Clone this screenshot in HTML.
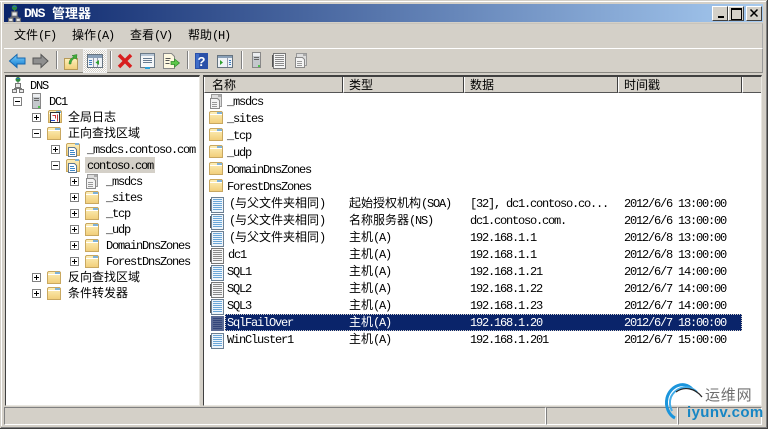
<!DOCTYPE html>
<html><head><meta charset="utf-8"><style>
html,body{margin:0;padding:0;background:#d4d0c8}
#w{position:relative;width:768px;height:429px;overflow:hidden;background:#d4d0c8;font-family:"Liberation Mono","Noto Sans CJK SC",monospace;font-size:12px;color:#000}
#w div{position:absolute}
.t{white-space:pre;height:16px;line-height:16px;letter-spacing:-1.2px;margin-top:1px}
.t i{font-style:normal;font-family:"WenQuanYi Zen Hei","Noto Sans CJK SC",sans-serif;font-size:12px;letter-spacing:0;position:relative;top:0}
.t:has(i){margin-top:0}
svg{position:absolute;overflow:visible}
.b{width:7px;height:7px;border:1px solid #808080;background:#fff}
.b:before{content:"";position:absolute;left:1px;top:3px;width:5px;height:1px;background:#000}
.p:after{content:"";position:absolute;left:3px;top:1px;width:1px;height:5px;background:#000}
.sep{width:1px;height:18px;top:51px;background:#808080;border-right:1px solid #fff}
.h{top:77px;height:15px;background:#d4d0c8;border-right:1px solid #404040;border-left:1px solid #fff;border-bottom:1px solid #555}
.wb{width:14px;height:13px;top:6px;background:#d4d0c8;border:1px solid;border-color:#fff #404040 #404040 #fff}
</style></head><body><div id="w">
<svg width="0" height="0" style="position:absolute"><defs>
<linearGradient id="fg" x1="0" y1="0" x2="0" y2="1"><stop offset="0" stop-color="#fdf0bb"/><stop offset="1" stop-color="#f1cd78"/></linearGradient>
<symbol id="folder" viewBox="0 0 14 13"><path d="M.5 12.500V1.500l1-1h11l1 1v11z" fill="url(#fg)" stroke="#c9a860"/><path d="M8 1h5v2H8z" fill="#7fb2d8"/><path d="M1 3.500h12" stroke="#fff"/></symbol>
<symbol id="rec" viewBox="0 0 14 16"><rect x="1.500" y=".5" width="12" height="15" fill="#eef5fb" stroke="#6b7f93"/><path d="M3 2.500h9M3 4.500h9M3 6.500h9M3 8.500h9M3 10.500h9M3 12.500h9" stroke="#6aa6d8"/><path d="M.5 2v12" stroke="#555"/></symbol>
<symbol id="recg" viewBox="0 0 14 16"><rect x="1.500" y=".5" width="12" height="15" fill="#f6f6f6" stroke="#777"/><path d="M3 2.500h9M3 4.500h9M3 6.500h9M3 8.500h9M3 10.500h9M3 12.500h9" stroke="#8a8a8a"/><path d="M.5 2v12" stroke="#555"/></symbol>
<symbol id="zone" viewBox="0 0 14 15"><path d="M.5 13.500V2.500l1-1h11l1 1v11z" fill="url(#fg)" stroke="#c9a860"/><path d="M9 1h4v2H9z" fill="#7fb2d8"/><path d="M2.500 5.500h6l2 2v7h-8z" fill="#fff" stroke="#607890"/><path d="M4 8.500h4M4 10.500h5M4 12.500h5" stroke="#3b86c6"/></symbol>
<symbol id="zoneg" viewBox="0 0 14 15"><path d="M2.500 .5h10v12h-10z" fill="#ddd" stroke="#999"/><path d="M9 1h3v2H9z" fill="#aaa"/><path d="M1.500 4.500h7l2 2v8h-9z" fill="#f4f4f4" stroke="#8a8a8a"/><path d="M3 8.500h5M3 10.500h5M3 12.500h5" stroke="#999"/></symbol>
<symbol id="dns" viewBox="0 0 12 16"><circle cx="6" cy="2.500" r="2.500" fill="#2f8a3e"/><path d="M4 2a2.200 2 0 0 1 4 0z" fill="#2a6cc0"/><path d="M6 5v2" stroke="#666"/><rect x="3.500" y="6.500" width="5" height="4" fill="#e8e8e8" stroke="#777"/><path d="M2.500 13v-1.500h7V13" fill="none" stroke="#777"/><rect x=".5" y="12.500" width="4" height="3" fill="#e8e8e8" stroke="#777"/><rect x="7.500" y="12.500" width="4" height="3" fill="#e8e8e8" stroke="#777"/></symbol>
<symbol id="srv" viewBox="0 0 9 16"><rect x=".5" y=".5" width="8" height="15" fill="#c4c8cc" stroke="#888"/><path d="M1 1h7v3H1z" fill="#eceef0"/><path d="M2 5.500h5M2 7.500h5" stroke="#666"/><rect x="6" y="13" width="2" height="2" fill="#4fc04f"/></symbol>
</defs></svg>

<!-- window frame -->
<div style="left:0;top:1px;width:768px;height:1px;background:#fff"></div>
<div style="left:1px;top:1px;width:1px;height:425px;background:#fff"></div>
<div style="left:767px;top:0;width:1px;height:429px;background:#404040"></div>
<div style="left:766px;top:1px;width:1px;height:427px;background:#808080"></div>
<div style="left:0;top:428px;width:768px;height:1px;background:#404040"></div>
<div style="left:1px;top:427px;width:766px;height:1px;background:#808080"></div>

<!-- title -->
<div style="left:4px;top:4px;width:759px;height:18px;background:linear-gradient(90deg,#0a246a,#a6caf0)"></div>
<svg style="left:8px;top:5px" width="13" height="17"><use href="#dns" width="13" height="17"/></svg>
<div style="left:24px;top:5px;height:17px;line-height:17px;color:#fff;font-weight:bold;font-size:13px;white-space:pre;font-family:'Liberation Mono',monospace;letter-spacing:-1px">DNS</div>
<div style="left:52px;top:4px;height:18px;line-height:18px;color:#fff;font-weight:bold;font-size:13px;white-space:pre;font-family:'WenQuanYi Zen Hei','Noto Sans CJK SC',sans-serif">管理器</div>
<div class="wb" style="left:712px"><div style="left:5px;top:9px;width:6px;height:2px;background:#000"></div></div>
<div class="wb" style="left:728px"><div style="left:2px;top:1px;width:9px;height:9px;border:1px solid #000;border-top-width:2px"></div></div>
<div class="wb" style="left:746px"><svg style="left:3px;top:2px" width="9" height="9"><path d="M.5 .5l7 7M7.500 .5l-7 7" stroke="#000" stroke-width="1.500"/></svg></div>

<!-- menu -->
<div style="left:4px;top:23px;width:758px;height:24px;border-top:1px solid #c8c4bc;border-right:1px solid #aaa;border-bottom:1px solid #8a8882"></div>
<div style="left:4px;top:48px;width:758px;height:23px;border-top:1px solid #fff;border-right:1px solid #999;border-bottom:1px solid #8a8882"></div>
<div class="t" style="left:14px;top:27px"><i>文件</i>(F)</div>
<div class="t" style="left:72px;top:27px"><i>操作</i>(A)</div>
<div class="t" style="left:130px;top:27px"><i>查看</i>(V)</div>
<div class="t" style="left:188px;top:27px"><i>帮助</i>(H)</div>

<!-- toolbar -->
<svg style="left:9px;top:54px" width="17" height="14"><defs><linearGradient id="ba" x1="0" y1="0" x2="0" y2="1"><stop offset="0" stop-color="#7cd0fa"/><stop offset="1" stop-color="#0f78d0"/></linearGradient></defs><path d="M.5 7L8 .5V4h8v6H8v3.500z" fill="url(#ba)" stroke="#1668b0"/></svg>
<svg style="left:32px;top:54px" width="17" height="14"><path d="M16 7L9 .5V4H1v6h8v3.500z" fill="#8f8f8f" stroke="#555"/></svg>
<div class="sep" style="left:56px"></div>
<svg style="left:64px;top:53px" width="15" height="17"><path d="M.5 5.500h13v11H.5z" fill="url(#fg)" stroke="#b79a58"/><path d="M5 11C5 7 7 5 10 4L8 2.500 13 1.500 12.500 6.500 11 5C9 6 7 8 7 11z" fill="#3fae3a" stroke="#2c7f2a" stroke-width=".5"/></svg>
<div style="left:83px;top:49px;width:22px;height:22px;border:1px solid #eee;background:repeating-conic-gradient(#fff 0 25%,#d4d0c8 0 50%) 0 0/2px 2px"></div>
<svg style="left:87px;top:54px" width="16" height="14"><rect x=".5" y=".5" width="15" height="13" fill="#eef2f6" stroke="#66737f"/><path d="M1 1h14v3H1z" fill="#8aa0b8"/><path d="M6.500 4v9M10.500 4v9" stroke="#99a"/><path d="M12 6L8.500 8.500 12 11z" fill="#2ea02e"/><path d="M2 6.500h3M2 8.500h3M2 10.500h3" stroke="#3b7cc0"/></svg>
<div class="sep" style="left:110px"></div>
<svg style="left:117px;top:53px" width="16" height="16"><path d="M2 2l12 12M14 2L2 14" stroke="#d81e1e" stroke-width="3.500"/></svg>
<svg style="left:140px;top:53px" width="15" height="16"><rect x=".5" y=".5" width="14" height="14" fill="#f4f6f8" stroke="#6b7a88"/><path d="M1 1h13v2H1z" fill="#b7c6d6"/><path d="M3 5.500h9M3 7.500h9M3 9.500h9" stroke="#667a90"/><path d="M5 14h5v2H5z" fill="#2aa0d8"/></svg>
<svg style="left:163px;top:53px" width="17" height="16"><path d="M.5 .5h8l3 3v12H.5z" fill="#fdf8e0" stroke="#888"/><path d="M2.500 5.500h5M2.500 7.500h4M2.500 10.500h4" stroke="#555"/><path d="M8 8.500h3.500V6L16.500 10l-5 4V11.500H8z" fill="#5cc84a" stroke="#2d8a2a" stroke-width=".7"/></svg>
<div class="sep" style="left:187px"></div>
<svg style="left:195px;top:53px" width="13" height="16"><rect width="13" height="16" fill="#2a50a8"/><rect x="1" y="1" width="3" height="14" fill="#3e6cc8"/><text x="6.500" y="13" font-family="Liberation Sans" font-weight="bold" font-size="13" fill="#fff" text-anchor="middle">?</text></svg>
<svg style="left:217px;top:55px" width="16" height="13"><rect x=".5" y=".5" width="15" height="12" fill="#eef2f6" stroke="#66737f"/><path d="M1 1h14v2H1z" fill="#8aa0b8"/><path d="M10.500 3v9" stroke="#99a"/><path d="M3 5v5l3-2.500z" fill="#2ea02e"/><path d="M12 5.500h2M12 7.500h2M12 9.500h2" stroke="#3b7cc0"/></svg>
<div class="sep" style="left:241px"></div>
<svg style="left:252px;top:52px" width="9" height="16"><use href="#srv" width="9" height="16"/></svg>
<svg style="left:272px;top:53px" width="14" height="16"><use href="#recg" width="14" height="16"/></svg>
<svg style="left:294px;top:53px" width="14" height="15"><use href="#zoneg" width="14" height="15"/></svg>

<!-- left pane -->
<div style="left:5px;top:75px;width:193px;height:328px;background:#fff;border-top:2px solid #404040;border-left:1px solid #404040;border-bottom:1px solid #e8e6e0;border-right:1px solid #e8e6e0"></div>
<svg style="left:12px;top:77px" width="12" height="16"><use href="#dns" width="12" height="16"/></svg>
<div class="t" style="left:30px;top:77px">DNS</div>
<div class="b" style="left:13px;top:97px"></div>
<svg style="left:32px;top:93px" width="9" height="16"><use href="#srv" width="9" height="16"/></svg>
<div class="t" style="left:49px;top:93px">DC1</div>
<div class="b p" style="left:32px;top:113px"></div>
<svg style="left:48px;top:110px" width="14" height="13"><use href="#folder" width="14" height="13"/><rect x="2.500" y="2.500" width="9" height="10" fill="#fff" stroke="#333"/><path d="M4.500 5.500h3v3M9.500 4.500v7" stroke="#c33" fill="none"/><path d="M3 10.500h4" stroke="#24c"/></svg>
<div class="t" style="left:68px;top:109px"><i>全局日志</i></div>
<div class="b" style="left:32px;top:129px"></div>
<svg style="left:47px;top:127px" width="14" height="13"><use href="#folder" width="14" height="13"/></svg>
<div class="t" style="left:68px;top:125px"><i>正向查找区域</i></div>
<div class="b p" style="left:51px;top:145px"></div>
<svg style="left:66px;top:142px" width="14" height="15"><use href="#zone" width="14" height="15"/></svg>
<div class="t" style="left:87px;top:141px">_msdcs.contoso.com</div>
<div class="b" style="left:51px;top:161px"></div>
<svg style="left:66px;top:158px" width="14" height="15"><use href="#zone" width="14" height="15"/></svg>
<div style="left:85px;top:157px;width:70px;height:16px;background:#d4d0c8"></div>
<div class="t" style="left:87px;top:157px">contoso.com</div>
<div class="b p" style="left:70px;top:177px"></div>
<svg style="left:85px;top:174px" width="14" height="15"><use href="#zoneg" width="14" height="15"/></svg>
<div class="t" style="left:106px;top:173px">_msdcs</div>
<div class="b p" style="left:70px;top:193px"></div>
<svg style="left:85px;top:191px" width="14" height="13"><use href="#folder" width="14" height="13"/></svg>
<div class="t" style="left:106px;top:189px">_sites</div>
<div class="b p" style="left:70px;top:209px"></div>
<svg style="left:85px;top:207px" width="14" height="13"><use href="#folder" width="14" height="13"/></svg>
<div class="t" style="left:106px;top:205px">_tcp</div>
<div class="b p" style="left:70px;top:225px"></div>
<svg style="left:85px;top:223px" width="14" height="13"><use href="#folder" width="14" height="13"/></svg>
<div class="t" style="left:106px;top:221px">_udp</div>
<div class="b p" style="left:70px;top:241px"></div>
<svg style="left:85px;top:239px" width="14" height="13"><use href="#folder" width="14" height="13"/></svg>
<div class="t" style="left:106px;top:237px">DomainDnsZones</div>
<div class="b p" style="left:70px;top:257px"></div>
<svg style="left:85px;top:255px" width="14" height="13"><use href="#folder" width="14" height="13"/></svg>
<div class="t" style="left:106px;top:253px">ForestDnsZones</div>
<div class="b p" style="left:32px;top:273px"></div>
<svg style="left:47px;top:271px" width="14" height="13"><use href="#folder" width="14" height="13"/></svg>
<div class="t" style="left:68px;top:269px"><i>反向查找区域</i></div>
<div class="b p" style="left:32px;top:289px"></div>
<svg style="left:47px;top:287px" width="14" height="13"><use href="#folder" width="14" height="13"/></svg>
<div class="t" style="left:68px;top:285px"><i>条件转发器</i></div>

<!-- right pane -->
<div style="left:203px;top:75px;width:557px;height:328px;background:#fff;border-top:2px solid #404040;border-left:1px solid #404040;border-bottom:1px solid #e8e6e0;border-right:1px solid #e8e6e0"></div>
<div class="h" style="left:204px;width:137px"></div>
<div class="h" style="left:343px;width:119px"></div>
<div class="h" style="left:464px;width:152px"></div>
<div class="h" style="left:618px;width:122px"></div>
<div class="h" style="left:742px;width:18px;border-right:0"></div>
<div class="t" style="left:212px;top:77px"><i>名称</i></div>
<div class="t" style="left:349px;top:77px"><i>类型</i></div>
<div class="t" style="left:470px;top:77px"><i>数据</i></div>
<div class="t" style="left:624px;top:77px"><i>时间戳</i></div>

<svg style="left:209px;top:94px" width="14" height="15"><use href="#zoneg" width="14" height="15"/></svg>
<div class="t" style="left:227px;top:93px">_msdcs</div>
<svg style="left:209px;top:111px" width="14" height="13"><use href="#folder" width="14" height="13"/></svg>
<div class="t" style="left:227px;top:110px">_sites</div>
<svg style="left:209px;top:128px" width="14" height="13"><use href="#folder" width="14" height="13"/></svg>
<div class="t" style="left:227px;top:127px">_tcp</div>
<svg style="left:209px;top:145px" width="14" height="13"><use href="#folder" width="14" height="13"/></svg>
<div class="t" style="left:227px;top:144px">_udp</div>
<svg style="left:209px;top:162px" width="14" height="13"><use href="#folder" width="14" height="13"/></svg>
<div class="t" style="left:227px;top:161px">DomainDnsZones</div>
<svg style="left:209px;top:179px" width="14" height="13"><use href="#folder" width="14" height="13"/></svg>
<div class="t" style="left:227px;top:178px">ForestDnsZones</div>

<svg style="left:210px;top:197px" width="14" height="16"><use href="#rec" width="14" height="16"/></svg>
<div class="t" style="left:229px;top:195px">(<i>与父文件夹相同</i>)</div>
<div class="t" style="left:349px;top:195px"><i>起始授权机构</i>(SOA)</div>
<div class="t" style="left:470px;top:195px">[32], dc1.contoso.co...</div>
<div class="t" style="left:624px;top:195px">2012/6/6 13:00:00</div>

<svg style="left:210px;top:214px" width="14" height="16"><use href="#rec" width="14" height="16"/></svg>
<div class="t" style="left:229px;top:212px">(<i>与父文件夹相同</i>)</div>
<div class="t" style="left:349px;top:212px"><i>名称服务器</i>(NS)</div>
<div class="t" style="left:470px;top:212px">dc1.contoso.com.</div>
<div class="t" style="left:624px;top:212px">2012/6/6 13:00:00</div>

<svg style="left:210px;top:231px" width="14" height="16"><use href="#rec" width="14" height="16"/></svg>
<div class="t" style="left:229px;top:229px">(<i>与父文件夹相同</i>)</div>
<div class="t" style="left:349px;top:229px"><i>主机</i>(A)</div>
<div class="t" style="left:470px;top:229px">192.168.1.1</div>
<div class="t" style="left:624px;top:229px">2012/6/8 13:00:00</div>

<svg style="left:210px;top:248px" width="14" height="16"><use href="#recg" width="14" height="16"/></svg>
<div class="t" style="left:228px;top:246px">dc1</div>
<div class="t" style="left:349px;top:246px"><i>主机</i>(A)</div>
<div class="t" style="left:470px;top:246px">192.168.1.1</div>
<div class="t" style="left:624px;top:246px">2012/6/8 13:00:00</div>

<svg style="left:210px;top:265px" width="14" height="16"><use href="#rec" width="14" height="16"/></svg>
<div class="t" style="left:227px;top:263px">SQL1</div>
<div class="t" style="left:349px;top:263px"><i>主机</i>(A)</div>
<div class="t" style="left:470px;top:263px">192.168.1.21</div>
<div class="t" style="left:624px;top:263px">2012/6/7 14:00:00</div>

<svg style="left:210px;top:282px" width="14" height="16"><use href="#recg" width="14" height="16"/></svg>
<div class="t" style="left:227px;top:280px">SQL2</div>
<div class="t" style="left:349px;top:280px"><i>主机</i>(A)</div>
<div class="t" style="left:470px;top:280px">192.168.1.22</div>
<div class="t" style="left:624px;top:280px">2012/6/7 14:00:00</div>

<svg style="left:210px;top:299px" width="14" height="16"><use href="#rec" width="14" height="16"/></svg>
<div class="t" style="left:227px;top:297px">SQL3</div>
<div class="t" style="left:349px;top:297px"><i>主机</i>(A)</div>
<div class="t" style="left:470px;top:297px">192.168.1.23</div>
<div class="t" style="left:624px;top:297px">2012/6/7 14:00:00</div>

<svg style="left:210px;top:316px" width="14" height="15"><rect x="1" y="0" width="13" height="15" fill="#5b6a94"/><path d="M3 2.500h9M3 4.500h9M3 6.500h9M3 8.500h9M3 10.500h9M3 12.500h9" stroke="#33457a"/></svg>
<div style="left:225px;top:314px;width:515px;height:15px;background:#0a246a;border:1px dotted #d4d0c8"></div>
<div class="t" style="left:227px;top:314px;color:#fff">SqlFailOver</div>
<div class="t" style="left:349px;top:314px;color:#fff"><i>主机</i>(A)</div>
<div class="t" style="left:470px;top:314px;color:#fff">192.168.1.20</div>
<div class="t" style="left:624px;top:314px;color:#fff">2012/6/7 18:00:00</div>

<svg style="left:210px;top:333px" width="14" height="16"><use href="#rec" width="14" height="16"/></svg>
<div class="t" style="left:227px;top:331px">WinCluster1</div>
<div class="t" style="left:349px;top:331px"><i>主机</i>(A)</div>
<div class="t" style="left:470px;top:331px">192.168.1.201</div>
<div class="t" style="left:624px;top:331px">2012/6/7 15:00:00</div>

<!-- status -->
<div style="left:4px;top:407px;width:540px;height:16px;border:1px solid;border-color:#808080 #fff #fff #808080"></div>
<div style="left:546px;top:407px;width:130px;height:16px;border:1px solid;border-color:#808080 #fff #fff #808080"></div>
<div style="left:678px;top:407px;width:82px;height:16px;border:1px solid;border-color:#808080 #fff #fff #808080"></div>

<!-- watermark -->
<svg style="left:660px;top:378px" width="50" height="46"><path d="M32 11C24 2 10 8 7 20c-2 9 2 17 8 20" fill="none" stroke="#1b95dc" stroke-width="3"/><path d="M37 14C28 5 15 10 11 19c-2 5-1 10 1 14" fill="none" stroke="#45ade8" stroke-width="2"/><path d="M42 19C35 10 24 8 16 14" fill="none" stroke="#222" stroke-width="1.200"/></svg>
<div style="left:705px;top:385px;height:20px;line-height:20px;font-size:15px;color:#6f6f6f;white-space:pre;font-family:'Noto Sans CJK SC',sans-serif;letter-spacing:.8px">运维网</div>
<div style="left:687px;top:404px;height:18px;line-height:18px;font-size:15px;font-weight:bold;color:#1786c4;white-space:pre;font-family:'Liberation Sans',sans-serif;letter-spacing:.4px">iyunv.com</div>
</div></body></html>
